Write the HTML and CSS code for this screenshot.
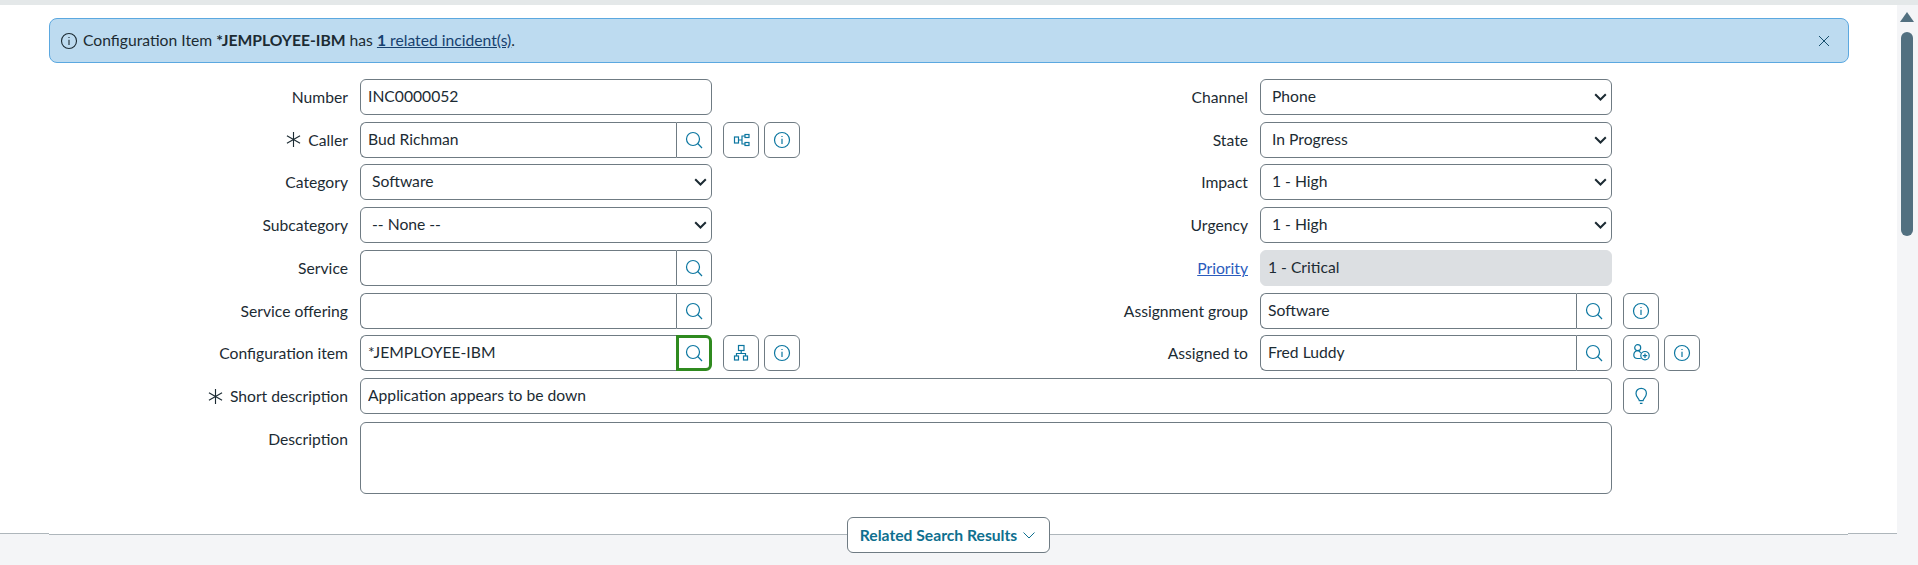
FILE: index.html
```html
<!DOCTYPE html>
<html lang="en">

<head>
  <meta charset="UTF-8">
  <meta name="viewport" content="width=device-width, initial-scale=1.0">
  <title>INC0000052 | Incident</title>
  <link rel="stylesheet" href="styles.css">
</head>

<body>
  <div class="topbar"></div>
  <div class="page">
    <main class="main">
      <div class="panel">
        <div class="alert">
          <svg class="alert-icon" viewBox="0 0 20 20"><circle cx="10" cy="10" r="7.5"/><path d="M10 8.8V14M10 6V7"/></svg>
          <span class="alert-text">Configuration Item <b>*JEMPLOYEE-IBM</b> has <a href="#" class="alert-link"><b>1</b> related incident(s)</a>.</span>
          <svg class="alert-close" viewBox="0 0 12 12"><path d="M1 1L11 11M11 1L1 11"/></svg>
        </div>

        <form class="form">
          <div class="cols">
            <div class="col">
              <div class="row">
                <label class="label">Number</label>
                <div class="field"><input class="input" type="text" value="INC0000052"></div>
              </div>
              <div class="row">
                <label class="label"><svg class="req" viewBox="0 0 16 16"><path d="M8 0V16M1 4L15 12M15 4L1 12"/></svg>Caller</label>
                <div class="field">
                  <div class="lookup">
                    <input class="input" type="text" value="Bud Richman">
                    <span class="lookup-btn"><svg class="icon" viewBox="0 0 20 20"><circle cx="9" cy="9" r="6.5"/><path d="M13.7 13.5L18 18"/></svg></span>
                  </div>
                </div>
                <span class="icon-btn"><svg class="icon" viewBox="0 0 20 20"><rect x="3.5" y="7" width="4" height="6"/><rect x="14" y="4.5" width="4" height="3"/><rect x="14" y="12.5" width="4" height="3"/><path d="M7.5 10H11M14 6H11V14H14"/></svg></span>
                <span class="icon-btn"><svg class="icon" viewBox="0 0 20 20"><circle cx="10" cy="10" r="7.5"/><path d="M10 8.8V14M10 6V7"/></svg></span>
              </div>
              <div class="row">
                <label class="label">Category</label>
                <div class="field"><select class="select"><option>Software</option></select></div>
              </div>
              <div class="row">
                <label class="label">Subcategory</label>
                <div class="field"><select class="select"><option>-- None --</option></select></div>
              </div>
              <div class="row">
                <label class="label">Service</label>
                <div class="field">
                  <div class="lookup">
                    <input class="input" type="text">
                    <span class="lookup-btn"><svg class="icon" viewBox="0 0 20 20"><circle cx="9" cy="9" r="6.5"/><path d="M13.7 13.5L18 18"/></svg></span>
                  </div>
                </div>
              </div>
              <div class="row">
                <label class="label">Service offering</label>
                <div class="field">
                  <div class="lookup">
                    <input class="input" type="text">
                    <span class="lookup-btn"><svg class="icon" viewBox="0 0 20 20"><circle cx="9" cy="9" r="6.5"/><path d="M13.7 13.5L18 18"/></svg></span>
                  </div>
                </div>
              </div>
              <div class="row">
                <label class="label">Configuration item</label>
                <div class="field">
                  <div class="lookup">
                    <input class="input" type="text" value="*JEMPLOYEE-IBM">
                    <span class="lookup-btn is-focus"><svg class="icon" viewBox="0 0 20 20"><circle cx="9" cy="9" r="6.5"/><path d="M13.7 13.5L18 18"/></svg></span>
                  </div>
                </div>
                <span class="icon-btn"><svg class="icon" viewBox="0 0 20 20"><rect x="7.5" y="2.5" width="5.5" height="5"/><rect x="3.5" y="13" width="4" height="4"/><rect x="12.5" y="13" width="4" height="4"/><path d="M10.2 7.5V10.5M5.5 13V10.5H14.5V13"/></svg></span>
                <span class="icon-btn"><svg class="icon" viewBox="0 0 20 20"><circle cx="10" cy="10" r="7.5"/><path d="M10 8.8V14M10 6V7"/></svg></span>
              </div>
            </div>

            <div class="col">
              <div class="row">
                <label class="label">Channel</label>
                <div class="field"><select class="select"><option>Phone</option></select></div>
              </div>
              <div class="row">
                <label class="label">State</label>
                <div class="field"><select class="select"><option>In Progress</option></select></div>
              </div>
              <div class="row">
                <label class="label">Impact</label>
                <div class="field"><select class="select"><option>1 - High</option></select></div>
              </div>
              <div class="row">
                <label class="label">Urgency</label>
                <div class="field"><select class="select"><option>1 - High</option></select></div>
              </div>
              <div class="row">
                <label class="label"><a href="#" class="label-link">Priority</a></label>
                <div class="field"><input class="input input-readonly" type="text" value="1 - Critical" readonly></div>
              </div>
              <div class="row">
                <label class="label">Assignment group</label>
                <div class="field">
                  <div class="lookup">
                    <input class="input" type="text" value="Software">
                    <span class="lookup-btn"><svg class="icon" viewBox="0 0 20 20"><circle cx="9" cy="9" r="6.5"/><path d="M13.7 13.5L18 18"/></svg></span>
                  </div>
                </div>
                <span class="icon-btn"><svg class="icon" viewBox="0 0 20 20"><circle cx="10" cy="10" r="7.5"/><path d="M10 8.8V14M10 6V7"/></svg></span>
              </div>
              <div class="row">
                <label class="label">Assigned to</label>
                <div class="field">
                  <div class="lookup">
                    <input class="input" type="text" value="Fred Luddy">
                    <span class="lookup-btn"><svg class="icon" viewBox="0 0 20 20"><circle cx="9" cy="9" r="6.5"/><path d="M13.7 13.5L18 18"/></svg></span>
                  </div>
                </div>
                <span class="icon-btn"><svg class="icon" viewBox="0 0 20 20"><circle cx="6.7" cy="4.7" r="3"/><path d="M9.7 10C9 8.5 8 7.7 6.7 7.7C4.5 7.7 2.8 9.6 2.8 12C2.8 14.2 4.3 15.5 6.5 15.5H9.8"/><circle cx="14" cy="12.7" r="4.2"/><path d="M14 10.5V14.9M11.8 12.7H16.2"/></svg></span>
                <span class="icon-btn"><svg class="icon" viewBox="0 0 20 20"><circle cx="10" cy="10" r="7.5"/><path d="M10 8.8V14M10 6V7"/></svg></span>
              </div>
            </div>
          </div>

          <div class="row">
            <label class="label"><svg class="req" viewBox="0 0 16 16"><path d="M8 0V16M1 4L15 12M15 4L1 12"/></svg>Short description</label>
            <div class="field field-wide"><input class="input" type="text" value="Application appears to be down"></div>
            <span class="icon-btn"><svg class="icon" viewBox="0 0 20 20"><path d="M8.3 14.7C8.1 12.6 5 11 5 7.5C5 4.4 7.2 2.3 10.2 2.3C13.2 2.3 15.4 4.4 15.4 7.5C15.4 11 12.3 12.6 12.1 14.7ZM8.9 17.3H11.5"/></svg></span>
          </div>
          <div class="row row-text">
            <label class="label">Description</label>
            <div class="field field-wide"><textarea class="textarea"></textarea></div>
          </div>
        </form>
      </div>

      <div class="related">
        <div class="related-edge"></div>
        <div class="related-mid">
          <span class="related-btn">Related Search Results<svg class="related-chevron" viewBox="0 0 12 7"><path d="M0.5 0.5L6 6L11.5 0.5"/></svg></span>
        </div>
        <div class="related-edge"></div>
      </div>
    </main>

    <aside class="scroll">
      <span class="scroll-arrow"></span>
      <span class="scroll-thumb"></span>
    </aside>
  </div>
</body>

</html>
```

FILE: styles.css
```css
* {
  box-sizing: border-box;
}

html,
body {
  height: 100%;
  margin: 0;
}

body {
  display: flex;
  flex-direction: column;
  height: 565px;
  overflow: hidden;
  font-family: Lato, "Liberation Sans", sans-serif;
  font-size: 15.68px;
  color: #1c2b33;
  background-color: #fff;
}

.topbar {
  height: 5px;
  background-color: #e4e8e9;
}

.page {
  display: flex;
  flex: 1;
  min-height: 0;
}

.main {
  display: flex;
  flex: 1;
  flex-direction: column;
}

.panel {
  flex: 1;
  padding: 13px 48px 0 49px;
}

/* alert */
.alert {
  display: flex;
  align-items: center;
  height: 45px;
  padding: 0 16px 0 9px;
  background-color: #bddbf0;
  border: 1px solid #5ba8e0;
  border-radius: 8px;
}

.alert-icon {
  width: 20px;
  height: 20px;
  margin-right: 4px;
  fill: none;
  stroke: #1c2b33;
  stroke-width: 1.1;
}

.alert-text {
  flex: 1;
  padding-bottom: 2px;
}

.alert-link {
  color: #17416f;
}

.alert-close {
  width: 12px;
  height: 12px;
  margin-right: 2px;
  fill: none;
  stroke: #17506e;
  stroke-width: 1;
}

/* form */
.form {
  display: flex;
  flex-direction: column;
  gap: 6.72px;
  margin: 16px 0 0 -49px;
}

.cols {
  display: grid;
  grid-template-columns: 900px 1fr;
}

.col {
  display: flex;
  flex-direction: column;
  gap: 6.72px;
}

.row {
  display: flex;
  gap: 5px;
  height: 36px;
}

.row-text {
  height: 72px;
  margin-top: 1px;
}

.label {
  display: flex;
  justify-content: flex-end;
  align-items: center;
  width: 348px;
  margin-right: 7px;
}

.row-text .label {
  align-items: flex-start;
  padding-top: 8px;
}

.label-link {
  color: #2b5cbd;
}

.req {
  width: 15px;
  height: 15px;
  margin-right: 7px;
  fill: none;
  stroke: #1c2b33;
  stroke-width: 1.2;
}

.field {
  width: 352px;
  margin-right: 6px;
}

.field-wide {
  width: 1252px;
}

.input,
.select,
.textarea {
  display: block;
  width: 100%;
  height: 100%;
  font-family: inherit;
  font-size: 15.68px;
  color: #1c2b33;
  background-color: #fff;
  border: 1px solid #6f7b83;
  border-radius: 6px;
  outline: none;
}

.input {
  padding: 0 7px 2px;
}

.select {
  padding: 0 24px 2px 11px;
  appearance: none;
  background-image: url("data:image/svg+xml,%3Csvg xmlns='http://www.w3.org/2000/svg' viewBox='0 0 13 8'%3E%3Cpath d='M1.2 1.2L6.5 6.5L11.8 1.2' fill='none' stroke='%231c2b33' stroke-width='2'/%3E%3C/svg%3E");
  background-repeat: no-repeat;
  background-position: right 4px center;
  background-size: 13px 8px;
}

.textarea {
  resize: none;
}

.input-readonly {
  background-color: #dcdfe2;
  border-color: #dcdfe2;
}

/* lookup: input with the search button on its right */
.lookup {
  display: flex;
  height: 100%;
}

.lookup .input {
  flex: 1;
  min-width: 0;
  border-right: none;
  border-radius: 6px 0 0 6px;
}

.lookup-btn {
  display: flex;
  justify-content: center;
  align-items: center;
  width: 36px;
  border: 1px solid #6f7b83;
  border-radius: 0 6px 6px 0;
}

.lookup-btn.is-focus {
  border: 3px solid #2f8a1f;
}

.icon-btn {
  display: flex;
  justify-content: center;
  align-items: center;
  width: 36px;
  background-color: #fff;
  border: 1px solid #6f7b83;
  border-radius: 6px;
}

.icon {
  width: 20px;
  height: 20px;
  fill: none;
  stroke: #0b76a0;
  stroke-width: 1.2;
}

/* related search results */
.related {
  display: grid;
  grid-template-columns: 49px 1fr 49px;
  height: 32px;
  background-color: #fff;
}

.related-edge {
  background-color: #f4f5f7;
  border-top: 1px solid #aeb6bb;
}

.related-mid {
  display: flex;
  justify-content: center;
  margin-top: 1px;
  background-color: #f4f5f7;
  border-top: 1px solid #aeb6bb;
}

.related-btn {
  display: flex;
  justify-content: center;
  align-items: center;
  gap: 6px;
  width: 203px;
  height: 36px;
  margin-top: -18px;
  padding-right: 2px;
  font-weight: 700;
  color: #0e6f8f;
  background-color: #fff;
  border: 1px solid #6f7b83;
  border-radius: 6px;
}

.related-chevron {
  width: 12px;
  height: 7px;
  fill: none;
  stroke: #0e6f8f;
  stroke-width: 1;
}

/* scrollbar */
.scroll {
  display: flex;
  flex-direction: column;
  align-items: center;
  width: 21px;
  padding: 7px 1px 0 0;
  background-color: #f4f5f7;
}

.scroll-arrow {
  width: 0;
  height: 0;
  border-right: 7px solid transparent;
  border-bottom: 10px solid #527080;
  border-left: 7px solid transparent;
}

.scroll-thumb {
  width: 12px;
  height: 204px;
  margin-top: 10px;
  background-color: #527080;
  border-radius: 6px;
}
```
